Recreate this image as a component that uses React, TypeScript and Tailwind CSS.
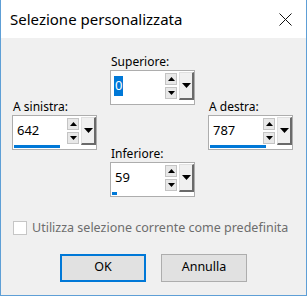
import React from "react";

const font = { fontFamily: '"Noto Sans", "Liberation Sans", sans-serif' };

function Arrow({ dir, big }: { dir: "up" | "down"; big?: boolean }) {
  const w = big ? 9 : 7;
  const h = big ? 5 : 4;
  return (
    <svg width={w} height={h} viewBox={`0 0 ${w} ${h}`}>
      {dir === "up" ? (
        <polygon points={`${w / 2},0 ${w},${h} 0,${h}`} fill="#000" />
      ) : (
        <polygon points={`0,0 ${w},0 ${w / 2},${h}`} fill="#000" />
      )}
    </svg>
  );
}

function SpinBox({
  value,
  bar,
  selected,
}: {
  value: string;
  bar: number;
  selected?: boolean;
}) {
  return (
    <div className="flex h-[35px] w-[85px] flex-col border border-[#adadad] bg-white">
      <div className="flex h-[29px] items-start pt-[1px]">
        <div className="flex h-[28px] flex-1 items-center pl-[3px] text-[13px] text-black">
          {selected ? (
            <span className="bg-[#0078d7] px-[1px] text-white">{value}</span>
          ) : (
            <span className="pl-[1px]">{value}</span>
          )}
        </div>
        <div className="mt-[1px] flex flex-col gap-[2px]">
          <div className="flex h-[12px] w-[12px] items-center justify-center border border-[#c4c4c4] bg-[#e8e8e8]">
            <Arrow dir="up" />
          </div>
          <div className="flex h-[12px] w-[12px] items-center justify-center border border-[#c4c4c4] bg-[#e8e8e8]">
            <Arrow dir="down" />
          </div>
        </div>
        <div className="ml-[2px] flex h-[28px] w-[15px] items-center justify-center border-b-2 border-l border-r-2 border-t border-b-[#6a6a6a] border-l-[#e0e0e0] border-r-[#6a6a6a] border-t-[#e0e0e0] bg-[#f0f0f0]">
          <Arrow dir="down" big />
        </div>
      </div>
      <div className="mt-auto mb-[1px] ml-[1px] h-[3px] bg-[#0078d7]" style={{ width: bar }} />
    </div>
  );
}

function Field({
  label,
  value,
  bar,
  selected,
}: {
  label: string;
  value: string;
  bar: number;
  selected?: boolean;
}) {
  return (
    <div className="flex flex-col">
      <div className="h-[16px] pl-[1px] text-[12px] leading-[16px] text-black">{label}</div>
      <SpinBox value={value} bar={bar} selected={selected} />
    </div>
  );
}

export default function App() {
  return (
    <div
      className="flex h-[296px] w-[307px] flex-col border-x border-b border-[#5e9fd6] bg-[#f0f0f0]"
      style={font}
    >
      <div className="flex h-[38px] items-center justify-between bg-white pl-[9px] pr-[14px]">
        <span className="text-[15px] text-black">Selezione personalizzata</span>
        <svg width="13" height="13" viewBox="0 0 13 13">
          <path d="M0.5 0.5 L12.5 12.5 M12.5 0.5 L0.5 12.5" stroke="#111" strokeWidth="1" />
        </svg>
      </div>

      <div className="grid grid-cols-[85px_85px_85px] gap-x-[13px] pl-[11px]">
        <div className="mt-[61px]">
          <Field label="A sinistra:" value="642" bar={46} />
        </div>
        <div className="mt-[16px] flex flex-col gap-[41px]">
          <Field label="Superiore:" value="0" bar={0} selected />
          <Field label="Inferiore:" value="59" bar={5} />
        </div>
        <div className="mt-[61px]">
          <Field label="A destra:" value="787" bar={56} />
        </div>
      </div>

      <div className="mt-[22px] flex items-center gap-[5px] pl-[12px]">
        <div className="h-[14px] w-[14px] border border-[#c6c6c6] bg-white" />
        <span className="text-[12.5px] text-[#6d6d6d]">Utilizza selezione corrente come predefinita</span>
      </div>

      <div className="mt-[16px] flex justify-center gap-[15px]">
        <button className="h-[28px] w-[86px] border-2 border-[#0078d7] bg-[#e1e1e1] text-[12.5px] text-black">
          OK
        </button>
        <button className="h-[28px] w-[86px] border border-[#adadad] bg-[#e1e1e1] text-[12.5px] text-black">
          Annulla
        </button>
      </div>
    </div>
  );
}
